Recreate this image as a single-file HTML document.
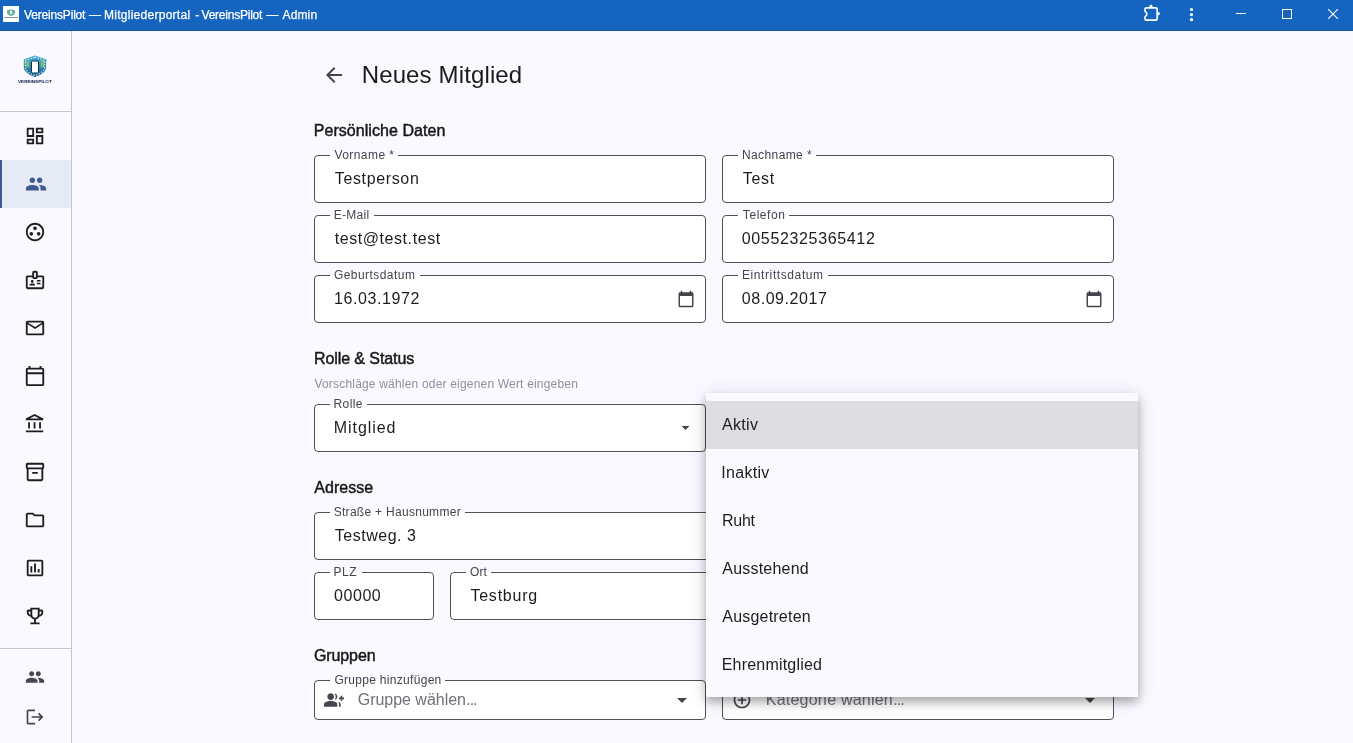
<!DOCTYPE html>
<html lang="de">
<head>
<meta charset="utf-8">
<title>VereinsPilot — Mitgliederportal</title>
<style>
*{box-sizing:border-box;margin:0;padding:0}
html,body{width:1353px;height:743px;overflow:hidden}
body{position:relative;background:#F9F9FF;font-family:"Liberation Sans",sans-serif;color:#1a1b20}
#app{position:absolute;left:0;top:0;width:1353px;height:743px;will-change:transform}
.abs{position:absolute}
.t{position:absolute;white-space:nowrap;line-height:1}
#tb{position:absolute;left:0;top:0;width:1353px;height:30px;background:#1565C0}
#tb2{position:absolute;left:0;top:30px;width:1353px;height:1px;background:#1D559E}
#tb3{position:absolute;left:0;top:31px;width:1353px;height:1px;background:#EEFDFF}
.tbx{top:9px;font-size:12px;color:#fff;-webkit-text-stroke:.25px #fff}
#sbl{position:absolute;left:71px;top:31px;width:1px;height:712px;background:#C6C6CE}
.hr{position:absolute;left:0;width:71px;height:1px;background:#C6C6CE}
.ic{position:absolute;fill:#1c1c21}
#act{position:absolute;left:0;top:160px;width:71px;height:48px;background:#E6EAF5}
#acti{position:absolute;left:0;top:160px;width:2px;height:48px;background:#3D5A92}
.f{position:absolute;height:48px;border:1px solid #505158;border-radius:4px;background:#fff}
.lb{position:absolute;top:-7px;height:12px;font-size:12px;line-height:12px;color:#44464e;white-space:nowrap}
.nt{position:absolute;top:-1px;height:1px;background:linear-gradient(to bottom,#F9F9FF,#F9F9FF)}
.v{position:absolute;font-size:16px;line-height:16px;color:#1c1c22;white-space:nowrap}
.ph{color:#6e7078}
.h{font-size:16px;color:#16171c;-webkit-text-stroke:.45px #16171c}
#menu{position:absolute;left:706px;top:393px;width:432px;height:304px;background:#F9F9FF;border-radius:1px;box-shadow:0 5px 10px rgba(0,0,0,.27),0 3px 20px rgba(0,0,0,.14)}
.mi{position:absolute;left:0;width:432px;height:48px}
.mi span{position:absolute;top:16px;font-size:16px;line-height:16px;color:#1c1c22;white-space:nowrap}
</style>
</head>
<body>
<div id="app">
<div id="tb"></div><div id="tb2"></div><div id="tb3"></div>
<svg class="abs" style="left:3px;top:6px" width="16" height="16" viewBox="0 0 16 16"><rect width="16" height="16" fill="#FCFFFE"/><path d="M8 3.300l4 1v2.200c0 1.900-1.700 3-4 3.600-2.300-.6-4-1.700-4-3.600V4.300z" fill="#6FB1A7"/><rect x="7" y="4.600" width="2" height="3.400" rx=".4" fill="#E6F7F3"/><rect x="1.300" y="11.100" width="13.400" height=".9" fill="#7E8289"/></svg>
<span class="t tbx" id="tx1" style="left:23.98px;letter-spacing:-0.171px">VereinsPilot</span>
<span class="t tbx" id="tx2" style="left:89.06px;letter-spacing:0.000px">—</span>
<span class="t tbx" id="tx3" style="left:103.98px;letter-spacing:0.272px">Mitgliederportal</span>
<span class="t tbx" id="tx4" style="left:195.34px;letter-spacing:0.000px">-</span>
<span class="t tbx" id="tx5" style="left:201.52px;letter-spacing:-0.229px">VereinsPilot</span>
<span class="t tbx" id="tx6" style="left:266.28px;letter-spacing:0.000px">—</span>
<span class="t tbx" id="tx7" style="left:282.56px;letter-spacing:0.125px">Admin</span>
<svg class="abs" style="left:1142px;top:3px" width="20" height="20" viewBox="0 0 20 20"><path d="M4.500 4.800H13.700Q15.200 4.800 15.200 6.300V15.700Q15.200 17.200 13.700 17.200H4.500Q3 17.200 3 15.700V13.700Q4.800 12.800 4.800 10.900Q4.800 9 3 8.200V6.300Q3 4.800 4.500 4.800Z" fill="none" stroke="#fff" stroke-width="1.700" stroke-linejoin="round"/><path d="M6.800 4.800Q9 -1.600 11.200 4.800Z" fill="#fff"/><path d="M15.200 8.500Q21 10.700 15.200 12.900Z" fill="#fff"/></svg>
<svg class="abs" style="left:1189px;top:7px" width="5" height="16" viewBox="0 0 5 16" fill="#fff"><circle cx="2.500" cy="2.500" r="1.600"/><circle cx="2.500" cy="7.600" r="1.600"/><circle cx="2.500" cy="12.700" r="1.600"/></svg>
<div class="abs" style="left:1236px;top:13px;width:10px;height:1px;background:#fff"></div>
<div class="abs" style="left:1282px;top:9px;width:10px;height:10px;border:1px solid #fff"></div>
<svg class="abs" style="left:1328px;top:9px" width="10" height="10" viewBox="0 0 10 10" stroke="#fff" stroke-width="1.100"><path d="M0 0L10 10M10 0L0 10"/></svg>
<div id="sbl"></div><div class="hr" style="top:111px"></div><div class="hr" style="top:648px"></div><div id="act"></div><div id="acti"></div>
<svg class="abs" style="left:16px;top:52px" width="40" height="34" viewBox="0 0 40 34">
<defs><linearGradient id="lg" x1="0" y1="0" x2="0" y2="1"><stop offset="0" stop-color="#45AED3"/><stop offset="1" stop-color="#17608F"/></linearGradient></defs>
<path d="M19 3.600l11.200 3.600v7.400c0 5-4.600 8.400-11.200 10.400C12.400 23 7.800 19.600 7.800 14.600V7.200z" fill="url(#lg)"/>
<path d="M9.300 9l4-.8v7.600l-3.200-.8z" fill="#86C96B" opacity=".8"/><path d="M28.700 9l-4-.8v7.600l3.200-.8z" fill="#86C96B" opacity=".8"/>
<path d="M19 5.200l9.600 3.100v6.300c0 4.200-3.900 7.100-9.600 8.900-5.700-1.800-9.600-4.700-9.600-8.900V8.300z" fill="none" stroke="#F4FBFF" stroke-width="1.300" stroke-dasharray="1.300 1.500" opacity=".85"/>
<rect x="15.500" y="9" width="7" height="12" rx="1" fill="#fff" stroke="#0E3560" stroke-width="1"/>
<text x="2" y="31" font-family="Liberation Sans, sans-serif" font-size="4.300" font-weight="bold" textLength="33.700" lengthAdjust="spacingAndGlyphs" fill="#0B1D4A">VEREINSPILOT</text>
</svg>
<svg class="abs" style="left:24.00px;top:125.00px" width="22" height="22" viewBox="0 0 24 24" fill="#1c1c21"><path d="M19 5v2h-4V5h4M9 5v6H5V5h4m10 8v6h-4v-6h4M9 17v2H5v-2h4M21 3h-8v6h8V3zM11 3H3v10h8V3zm10 8h-8v10h8V11zm-10 4H3v6h8v-6z"/></svg>
<svg class="abs" style="left:25.30px;top:173.00px" width="22" height="22" viewBox="0 0 24 24" fill="#3D5A92"><path d="M16 11c1.660 0 2.990-1.340 2.990-3S17.660 5 16 5c-1.660 0-3 1.340-3 3s1.340 3 3 3zm-8 0c1.660 0 2.990-1.340 2.990-3S9.660 5 8 5C6.340 5 5 6.340 5 8s1.340 3 3 3zm0 2c-2.330 0-7 1.170-7 3.500V19h14v-2.500c0-2.330-4.670-3.500-7-3.500zm8 0c-.290 0-.620.020-.970.050 1.160.840 1.970 1.970 1.970 3.450V19h6v-2.500c0-2.330-4.670-3.500-7-3.500z"/></svg>
<svg class="abs" style="left:24.00px;top:221.00px" width="22" height="22" viewBox="0 0 24 24" fill="#1c1c21"><path d="M12 2C6.480 2 2 6.480 2 12s4.480 10 10 10 10-4.480 10-10S17.520 2 12 2zm0 18c-4.410 0-8-3.590-8-8s3.590-8 8-8 8 3.590 8 8-3.590 8-8 8zM10 14a2 2 0 1 1-4 0 2 2 0 0 1 4 0zm4-6a2 2 0 1 1-4 0 2 2 0 0 1 4 0zm4 6a2 2 0 1 1-4 0 2 2 0 0 1 4 0z"/></svg>
<svg class="abs" style="left:24.00px;top:269.00px" width="22" height="22" viewBox="0 0 24 24" fill="#1c1c21"><path d="M14 13.500h4V12h-4v1.500zm0 3h4V15h-4v1.500zM20 7h-5V4c0-1.100-.9-2-2-2h-2c-1.100 0-2 .9-2 2v3H4c-1.100 0-2 .9-2 2v11c0 1.100.9 2 2 2h16c1.100 0 2-.9 2-2V9c0-1.100-.9-2-2-2zm-9-3h2v5h-2V4zm9 16H4V9h5c0 1.100.9 2 2 2h2c1.100 0 2-.9 2-2h5v11zM9 15c.830 0 1.500-.670 1.500-1.500S9.830 12 9 12s-1.500.670-1.500 1.500S8.170 15 9 15zm2.080 1.180c-.640-.280-1.340-.430-2.080-.430s-1.440.150-2.080.430c-.560.240-.920.780-.920 1.390V18h6v-.430c0-.610-.360-1.150-.920-1.390z"/></svg>
<svg class="abs" style="left:24.00px;top:317.00px" width="22" height="22" viewBox="0 0 24 24" fill="#1c1c21"><path d="M20 4H4c-1.100 0-1.990.9-1.990 2L2 18c0 1.100.9 2 2 2h16c1.100 0 2-.9 2-2V6c0-1.100-.9-2-2-2zm0 14H4V8l8 5 8-5v10zm-8-7L4 6h16l-8 5z"/></svg>
<svg class="abs" style="left:24.00px;top:365.00px" width="22" height="22" viewBox="0 0 24 24" fill="#1c1c21"><path d="M20 3h-1V1h-2v2H7V1H5v2H4c-1.100 0-2 .9-2 2v16c0 1.100.9 2 2 2h16c1.100 0 2-.9 2-2V5c0-1.100-.9-2-2-2zm0 18H4V10h16v11zm0-13H4V5h16v3z"/></svg>
<svg class="abs" style="left:24.00px;top:413.00px" width="22" height="22" viewBox="0 0 24 24" fill="#1c1c21"><path d="M6.500 10h-2v7h2v-7zm6 0h-2v7h2v-7zm8.500 9H2v2h19v-2zm-2.500-9h-2v7h2v-7zm-7-6.740L16.710 6H6.290l5.210-2.740m0-2.260L2 6v2h19V6l-9.500-5z"/></svg>
<svg class="abs" style="left:24.00px;top:461.00px" width="22" height="22" viewBox="0 0 24 24" fill="#1c1c21"><path d="M20 2H4c-1 0-2 .9-2 2v3.010c0 .720.430 1.340 1 1.690V20c0 1.100 1.100 2 2 2h14c.9 0 2-.9 2-2V8.700c.570-.350 1-.970 1-1.690V4c0-1.100-1-2-2-2zm-1 18H5V9h14v11zm1-13H4V4h16v3zM9 12h6v2H9z"/></svg>
<svg class="abs" style="left:24.00px;top:509.00px" width="22" height="22" viewBox="0 0 24 24" fill="#1c1c21"><path d="M9.170 6l2 2H20v10H4V6h5.170M10 4H4c-1.100 0-1.990.9-1.990 2L2 18c0 1.100.9 2 2 2h16c1.100 0 2-.9 2-2V8c0-1.100-.9-2-2-2h-8l-2-2z"/></svg>
<svg class="abs" style="left:24.00px;top:557.00px" width="22" height="22" viewBox="0 0 24 24" fill="#1c1c21"><path d="M9 17H7v-7h2v7zm4 0h-2V7h2v10zm4 0h-2v-4h2v4zm2 2H5V5h14v14zm0-16H5c-1.100 0-2 .9-2 2v14c0 1.100.9 2 2 2h14c1.100 0 2-.9 2-2V5c0-1.100-.9-2-2-2z"/></svg>
<svg class="abs" style="left:24.00px;top:605.00px" width="22" height="22" viewBox="0 0 24 24" fill="#1c1c21"><path d="M19 5h-2V3H7v2H5c-1.100 0-2 .9-2 2v1c0 2.550 1.920 4.630 4.390 4.940.630 1.500 1.980 2.630 3.610 2.960V19H7v2h10v-2h-4v-3.100c1.630-.330 2.980-1.460 3.610-2.960C19.080 12.630 21 10.550 21 8V7c0-1.100-.9-2-2-2zM5 8V7h2v3.820C5.840 10.400 5 9.300 5 8zm7 6c-1.650 0-3-1.350-3-3V5h6v6c0 1.650-1.350 3-3 3zm7-6c0 1.300-.840 2.400-2 2.820V7h2v1z"/></svg>
<svg class="abs" style="left:25.00px;top:667.00px" width="20" height="20" viewBox="0 0 24 24" fill="#45474f"><path d="M16 11c1.660 0 2.990-1.340 2.990-3S17.660 5 16 5c-1.660 0-3 1.340-3 3s1.340 3 3 3zm-8 0c1.660 0 2.990-1.340 2.990-3S9.660 5 8 5C6.340 5 5 6.340 5 8s1.340 3 3 3zm0 2c-2.330 0-7 1.170-7 3.500V19h14v-2.500c0-2.330-4.670-3.500-7-3.500zm8 0c-.290 0-.620.020-.970.050 1.160.840 1.970 1.970 1.970 3.450V19h6v-2.500c0-2.330-4.670-3.500-7-3.500z"/></svg>
<svg class="abs" style="left:25.00px;top:707.00px" width="20" height="20" viewBox="0 0 24 24" fill="#45474f"><path d="M17 7l-1.410 1.410L18.170 11H8v2h10.170l-2.580 2.580L17 17l5-5zM4 5h8V3H4c-1.100 0-2 .9-2 2v14c0 1.100.9 2 2 2h8v-2H4V5z"/></svg>
<svg class="abs" style="left:322.00px;top:63.00px" width="24" height="24" viewBox="0 0 24 24" fill="#44464e"><path d="M20 11H7.830l5.590-5.590L12 4l-8 8 8 8 1.410-1.410L7.830 13H20v-2z"/></svg>
<span class="t" id="ttl" style="left:361.69px;top:63px;font-size:24px;color:#1a1b20;letter-spacing:0.134px">Neues Mitglied</span>
<span class="t h" id="h1" style="left:313.72px;top:123px;letter-spacing:0.055px">Persönliche Daten</span>
<span class="t h" id="h2" style="left:314.00px;top:351px;letter-spacing:-0.091px">Rolle &amp; Status</span>
<span class="t" id="sub" style="left:314.48px;top:378px;font-size:12px;color:#8f9199;letter-spacing:0.188px">Vorschläge wählen oder eigenen Wert eingeben</span>
<span class="t h" id="h3" style="left:314.24px;top:480px;letter-spacing:0.049px">Adresse</span>
<span class="t h" id="h4" style="left:313.94px;top:648px;letter-spacing:-0.103px">Gruppen</span>
<div class="f" style="left:314px;top:155px;width:392px;height:48px"><span class="nt" style="left:15px;width:67.9px;height:1px;top:-1px;background:linear-gradient(to bottom,#F9F9FF 0,#F9F9FF 50%,#fff 50%)"></span><span class="lb" id="l_vor" style="left:19.48px;letter-spacing:0.429px">Vorname *</span><span class="v" id="v_vor" style="left:19.74px;top:15px;letter-spacing:0.643px">Testperson</span></div>
<div class="f" style="left:722px;top:155px;width:392px;height:48px"><span class="nt" style="left:15px;width:78.0px;height:1px;top:-1px;background:linear-gradient(to bottom,#F9F9FF 0,#F9F9FF 50%,#fff 50%)"></span><span class="lb" id="l_nach" style="left:18.96px;letter-spacing:0.401px">Nachname *</span><span class="v" id="v_nach" style="left:19.72px;top:15px;letter-spacing:0.751px">Test</span></div>
<div class="f" style="left:314px;top:215px;width:392px;height:48px"><span class="nt" style="left:15px;width:43.6px;height:1px;top:-1px;background:linear-gradient(to bottom,#F9F9FF 0,#F9F9FF 50%,#fff 50%)"></span><span class="lb" id="l_mail" style="left:18.80px;letter-spacing:0.273px">E-Mail</span><span class="v" id="v_mail" style="left:19.65px;top:15px;letter-spacing:0.573px">test@test.test</span></div>
<div class="f" style="left:722px;top:215px;width:392px;height:48px"><span class="nt" style="left:15px;width:50.7px;height:1px;top:-1px;background:linear-gradient(to bottom,#F9F9FF 0,#F9F9FF 50%,#fff 50%)"></span><span class="lb" id="l_tel" style="left:19.83px;letter-spacing:0.566px">Telefon</span><span class="v" id="v_tel" style="left:18.72px;top:15px;letter-spacing:0.656px">00552325365412</span></div>
<div class="f" style="left:314px;top:275px;width:392px;height:48px"><span class="nt" style="left:15px;width:89.5px;height:1px;top:-1px;background:linear-gradient(to bottom,#F9F9FF 0,#F9F9FF 50%,#fff 50%)"></span><span class="lb" id="l_geb" style="left:18.88px;letter-spacing:0.455px">Geburtsdatum</span><span class="v" id="v_geb" style="left:18.92px;top:15px;letter-spacing:0.601px">16.03.1972</span><svg class="abs" style="left:362.00px;top:14.00px" width="18" height="18" viewBox="0 0 24 24" fill="#44464e"><path d="M20 3h-1V1h-2v2H7V1H5v2H4c-1.100 0-2 .9-2 2v16c0 1.100.9 2 2 2h16c1.100 0 2-.9 2-2V5c0-1.100-.9-2-2-2zm0 18H4V8h16v13z"/></svg></div>
<div class="f" style="left:722px;top:275px;width:392px;height:48px"><span class="nt" style="left:15px;width:89.8px;height:1px;top:-1px;background:linear-gradient(to bottom,#F9F9FF 0,#F9F9FF 50%,#fff 50%)"></span><span class="lb" id="l_ein" style="left:18.96px;letter-spacing:0.599px">Eintrittsdatum</span><span class="v" id="v_ein" style="left:18.72px;top:15px;letter-spacing:0.558px">08.09.2017</span><svg class="abs" style="left:362.00px;top:14.00px" width="18" height="18" viewBox="0 0 24 24" fill="#44464e"><path d="M20 3h-1V1h-2v2H7V1H5v2H4c-1.100 0-2 .9-2 2v16c0 1.100.9 2 2 2h16c1.100 0 2-.9 2-2V5c0-1.100-.9-2-2-2zm0 18H4V8h16v13z"/></svg></div>
<div class="f" style="left:314px;top:404px;width:392px;height:48px"><span class="nt" style="left:15px;width:37.2px;height:1px;top:-1px;background:linear-gradient(to bottom,#F9F9FF 0,#F9F9FF 50%,#fff 50%)"></span><span class="lb" id="l_rolle" style="left:18.57px;letter-spacing:0.374px">Rolle</span><span class="v" id="v_rolle" style="left:18.76px;top:15px;letter-spacing:0.937px">Mitglied</span><svg class="abs" style="left:361.10px;top:13.30px" width="19" height="19" viewBox="0 0 24 24" fill="#44464e"><path d="M7 10l5 5 5-5z"/></svg></div>
<div class="f" style="left:314px;top:512px;width:800px;height:48px"><span class="nt" style="left:15px;width:135.3px;height:1px;top:-1px;background:linear-gradient(to bottom,#F9F9FF 0,#F9F9FF 50%,#fff 50%)"></span><span class="lb" id="l_str" style="left:18.68px;letter-spacing:0.292px">Straße + Hausnummer</span><span class="v" id="v_str" style="left:19.72px;top:15px;letter-spacing:0.528px">Testweg. 3</span></div>
<div class="f" style="left:314px;top:572px;width:120px;height:48px"><span class="nt" style="left:15px;width:31.6px;height:1px;top:-1px;background:linear-gradient(to bottom,#F9F9FF 0,#F9F9FF 50%,#fff 50%)"></span><span class="lb" id="l_plz" style="left:18.57px;letter-spacing:0.543px">PLZ</span><span class="v" id="v_plz" style="left:19.04px;top:15px;letter-spacing:0.562px">00000</span></div>
<div class="f" style="left:450px;top:572px;width:664px;height:48px"><span class="nt" style="left:15px;width:24.8px;height:1px;top:-1px;background:linear-gradient(to bottom,#F9F9FF 0,#F9F9FF 50%,#fff 50%)"></span><span class="lb" id="l_ort" style="left:19.01px;letter-spacing:0.050px">Ort</span><span class="v" id="v_ort" style="left:19.42px;top:15px;letter-spacing:0.777px">Testburg</span></div>
<div class="f" style="left:314px;top:680px;width:392px;height:40px"><span class="nt" style="left:15px;width:115.2px;height:1px;top:-1px;background:linear-gradient(to bottom,#F9F9FF 0,#F9F9FF 50%,#fff 50%)"></span><span class="lb" id="l_grp" style="left:19.42px;letter-spacing:0.300px">Gruppe hinzufügen</span><span class="v ph" id="v_grp" style="left:42.73px;top:11px;letter-spacing:-0.025px">Gruppe wählen<span style="letter-spacing:-1.05px;margin-left:.4px">...</span></span><svg class="abs" style="left:9px;top:9px" width="20" height="20" viewBox="0 -960 960 960" fill="#44464e"><path d="M500-482q29-32 44.500-73t15.500-85q0-44-15.500-85T500-798q60 8 100 53t40 105q0 60-40 105t-100 53Zm220 322v-120q0-36-16-68.500T662-406q51 18 94.500 46.500T800-280v120h-80Zm80-280v-80h-80v-80h80v-80h80v80h80v80h-80v80h-80Zm-480-40q-66 0-113-47t-47-113q0-66 47-113t113-47q66 0 113 47t47 113q0 66-47 113t-113 47ZM0-160v-112q0-34 17.500-62.500T64-378q62-31 126-46.500T320-440q66 0 130 15.500T576-378q29 15 46.500 43.500T640-272v112H0Z"/></svg><svg class="abs" style="left:355.00px;top:7.00px" width="24" height="24" viewBox="0 0 24 24" fill="#44464e"><path d="M7 10l5 5 5-5z"/></svg></div>
<div class="f" style="left:722px;top:680px;width:392px;height:40px"><span class="v ph" id="v_kat" style="left:42.76px;top:11px;letter-spacing:0.223px">Kategorie wählen<span style="letter-spacing:-1.05px;margin-left:.4px">...</span></span><svg class="abs" style="left:9.00px;top:9.00px" width="20" height="20" viewBox="0 0 24 24" fill="#44464e"><path d="M13 7h-2v4H7v2h4v4h2v-4h4v-2h-4V7zm-1-5C6.480 2 2 6.480 2 12s4.480 10 10 10 10-4.480 10-10S17.520 2 12 2zm0 18c-4.410 0-8-3.590-8-8s3.590-8 8-8 8 3.590 8 8-3.590 8-8 8z"/></svg><svg class="abs" style="left:355.00px;top:7.00px" width="24" height="24" viewBox="0 0 24 24" fill="#44464e"><path d="M7 10l5 5 5-5z"/></svg></div>
<div id="menu">
<div class="mi" style="top:8px;background:#DCDCE1"><span id="m0" style="left:16.09px;letter-spacing:0.305px">Aktiv</span></div>
<div class="mi" style="top:56px"><span id="m1" style="left:15.21px;letter-spacing:0.320px">Inaktiv</span></div>
<div class="mi" style="top:104px"><span id="m2" style="left:15.95px;letter-spacing:-0.238px">Ruht</span></div>
<div class="mi" style="top:152px"><span id="m3" style="left:16.29px;letter-spacing:0.215px">Ausstehend</span></div>
<div class="mi" style="top:200px"><span id="m4" style="left:16.29px;letter-spacing:0.207px">Ausgetreten</span></div>
<div class="mi" style="top:248px"><span id="m5" style="left:15.76px;letter-spacing:0.200px">Ehrenmitglied</span></div>
</div>
</div>
</body>
</html>
